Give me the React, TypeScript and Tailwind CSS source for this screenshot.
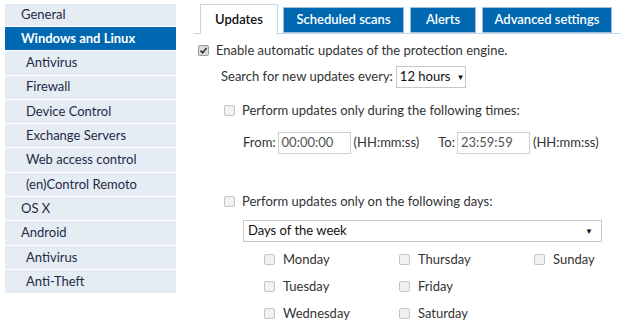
import React from "react";

const font = { fontFamily: "Lato, 'Open Sans', sans-serif" };

const sideItems: { label: string; level: number; active?: boolean }[] = [
  { label: "General", level: 0 },
  { label: "Windows and Linux", level: 0, active: true },
  { label: "Antivirus", level: 1 },
  { label: "Firewall", level: 1 },
  { label: "Device Control", level: 1 },
  { label: "Exchange Servers", level: 1 },
  { label: "Web access control", level: 1 },
  { label: "(en)Control Remoto", level: 1 },
  { label: "OS X", level: 0 },
  { label: "Android", level: 0 },
  { label: "Antivirus", level: 1 },
  { label: "Anti-Theft", level: 1 },
];

const Box: React.FC<{ checked?: boolean }> = ({ checked }) => (
  <span
    className={
      "flex h-[11px] w-[11px] shrink-0 items-center justify-center rounded-[2px] border " +
      (checked ? "border-[#9a9a9a] bg-[#dcdcdc]" : "border-[#c4c4c4] bg-[#f1f1f1]")
    }
  >
    {checked && (
      <svg width="9" height="9" viewBox="0 0 9 9">
        <path d="M1.5 4.6 L3.6 6.7 L7.6 2" fill="none" stroke="#333" strokeWidth="1.6" />
      </svg>
    )}
  </span>
);

const days = [
  ["Monday", "Thursday", "Sunday"],
  ["Tuesday", "Friday", ""],
  ["Wednesday", "Saturday", ""],
];

export default function App() {
  return (
    <div className="flex h-[324px] w-[621px] bg-white text-[13px] text-[#333]" style={font}>
      <nav className="ml-[5px] mt-[4px] flex w-[171px] flex-col gap-px self-start">
        {sideItems.map((it, i) => (
          <div
            key={i}
            className={
              "flex items-center " +
              (i === 0 ? "h-[22px] " : "h-[23.3px] ") +
              (it.level ? "pl-[21px] " : "pl-[16px] ") +
              (it.active ? "bg-[#0067b1] font-bold text-white" : "bg-[#e6ecf4] text-[#1e2a44]")
            }
          >
            {it.label}
          </div>
        ))}
      </nav>

      <main className="ml-[18px] flex-1">
        <div className="mt-[4px] flex items-end gap-[5px] border-b border-[#c9d6e3] pl-[6px]">
          <div className="-mb-px flex h-[30px] w-[78px] items-center justify-center border border-b-0 border-[#c9d6e3] bg-white font-semibold text-[#111]">
            Updates
          </div>
          <div className="flex h-[26px] w-[121px] items-center justify-center border border-[#9cc1e0] bg-[#0067b1] font-semibold text-white">
            Scheduled scans
          </div>
          <div className="ml-px flex h-[26px] w-[66px] items-center justify-center border border-[#9cc1e0] bg-[#0067b1] font-semibold text-white">
            Alerts
          </div>
          <div className="ml-px flex h-[26px] w-[130px] items-center justify-center border border-[#9cc1e0] bg-[#0067b1] font-semibold text-white">
            Advanced settings
          </div>
        </div>

        <div className="pl-[4px]">
          <label className="mt-[10px] flex h-[13px] items-center gap-[7px]">
            <Box checked />
            <span>Enable automatic updates of the protection engine.</span>
          </label>

          <div className="mt-[9px] flex items-center pl-[23px]">
            <span>Search for new updates every:</span>
            <div className="ml-[3px] flex h-[22px] w-[70px] items-center gap-[6px] whitespace-nowrap border border-[#c8c8c8] bg-white pl-[3px] text-[#111]">
              <span>12 hours</span>
              <span className="text-[8px]">▼</span>
            </div>
          </div>

          <label className="mt-[16px] flex h-[13px] items-center gap-[7px] pl-[26px]">
            <Box />
            <span>Perform updates only during the following times:</span>
          </label>

          <div className="mt-[15px] flex items-center whitespace-nowrap pl-[45px]">
            <span>From:</span>
            <div className="ml-[2px] flex h-[22px] w-[73px] items-center border border-[#d0d0d0] px-[3px] text-[#555]">00:00:00</div>
            <span className="ml-[3px]">(HH:mm:ss)</span>
            <span className="ml-[19px]">To:</span>
            <div className="ml-[2px] flex h-[22px] w-[73px] items-center border border-[#d0d0d0] px-[3px] text-[#555]">23:59:59</div>
            <span className="ml-[3px]">(HH:mm:ss)</span>
          </div>

          <label className="mt-[41px] flex h-[13px] items-center gap-[7px] pl-[26px]">
            <Box />
            <span>Perform updates only on the following days:</span>
          </label>

          <div className="ml-[45px] mt-[12px] flex h-[22px] w-[359px] items-center justify-between border border-[#c8c8c8] pl-[4px] pr-[8px] text-[#111]">
            <span>Days of the week</span>
            <span className="text-[8px]">▼</span>
          </div>

          <div className="mt-[11px] flex flex-col gap-[14px] pl-[66px]">
            {days.map((row, r) => (
              <div key={r} className="flex h-[13px] items-center">
                {row.map((d, c) => (
                  <div key={c} className={"flex items-center gap-[8px] " + (c === 0 ? "w-[135px]" : c === 1 ? "w-[135px]" : "")}>
                    {d && <Box />}
                    {d && <span>{d}</span>}
                  </div>
                ))}
              </div>
            ))}
          </div>
        </div>
      </main>
    </div>
  );
}
